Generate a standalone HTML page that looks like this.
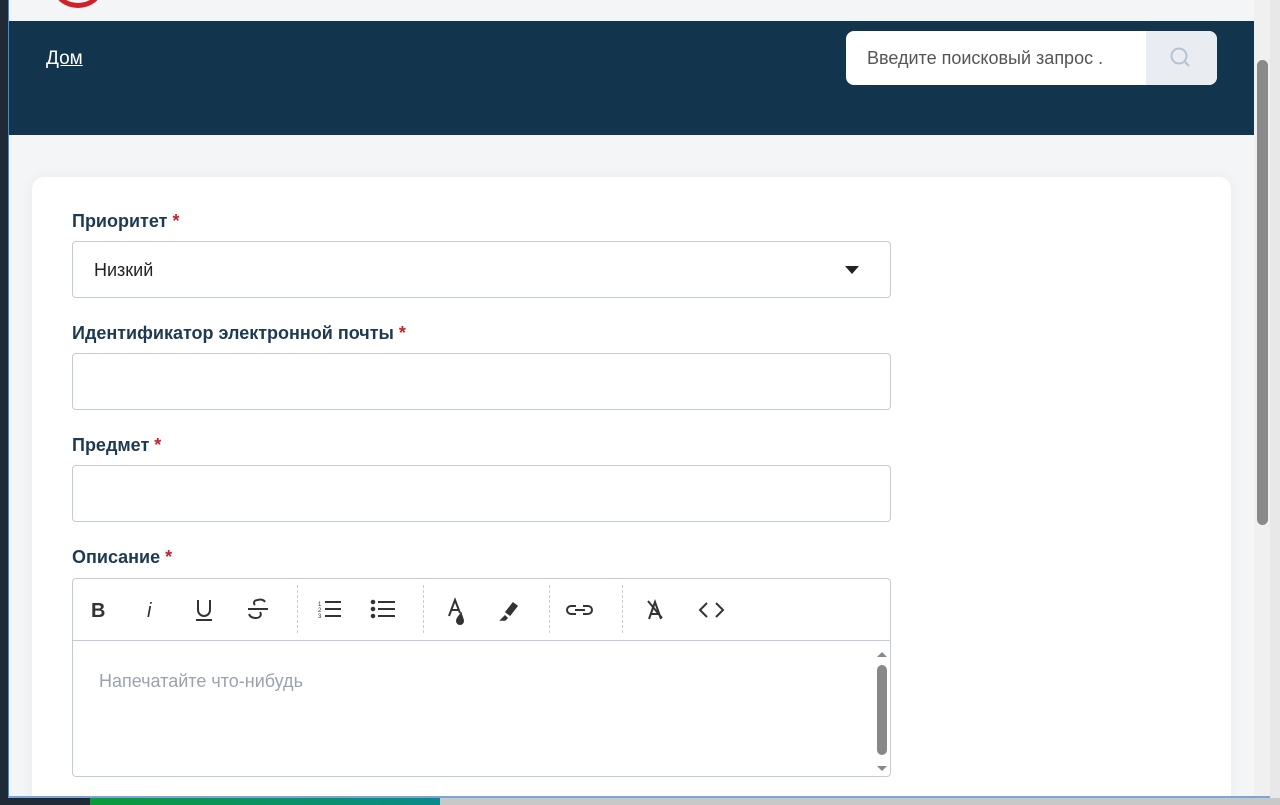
<!DOCTYPE html>
<html><head><meta charset="utf-8"><style>
*{box-sizing:border-box;margin:0;padding:0}
body{width:1280px;height:805px;overflow:hidden;background:#1f2a36;font-family:"Liberation Sans",sans-serif;position:relative}
#win{position:absolute;left:8px;top:0;width:1262px;height:798px;background:#f4f5f7;border-left:1px solid #3a8ee0;border-bottom:2px solid #7aa6d4;overflow:hidden}
#rs{position:absolute;left:1270px;top:0;width:10px;height:805px;background:#e8e8e8}
#tb{position:absolute;left:0;top:798px;width:1280px;height:7px;background:#c8c8c8}
#tb1{position:absolute;left:0;top:798px;width:90px;height:7px;background:#1f2a36}
#tb2{position:absolute;left:90px;top:798px;width:350px;height:7px;background:linear-gradient(90deg,#0a9a3a,#0a8a8a)}
.hdr{position:absolute;left:0;top:21px;width:1245px;height:114px;background:#12344d}
.logo{position:absolute;left:45px;top:-30px;width:48px;height:38px;border:5px solid #d0202a;border-radius:50%}
.home{position:absolute;left:37px;top:27px;color:#fff;font-size:19px;text-decoration:underline}
.search{position:absolute;left:837px;top:10px;width:371px;height:54px;background:#fff;border-radius:8px;overflow:hidden}
.search span{position:absolute;left:21px;top:17px;font-size:18px;color:#555;white-space:nowrap}
.search .btn{position:absolute;right:0;top:0;width:71px;height:54px;background:#e9edf2}
.sb{position:absolute;left:1245px;top:0;width:17px;height:798px;background:#f0f0f0}
.sb i{position:absolute;left:3px;top:60px;width:11px;height:465px;background:#8a8a8a;border-radius:6px}
.card{position:absolute;left:23px;top:177px;width:1199px;height:640px;background:#fff;border-radius:12px;box-shadow:0 0 12px rgba(0,0,0,.05)}
.lab{position:absolute;left:40px;font-size:18px;font-weight:bold;color:#1d3a52}
.lab b{color:#c0232b}
.inp{position:absolute;left:40px;width:819px;height:57px;border:1px solid #c3ccd6;border-radius:4px;background:#fff}
.ed{position:absolute;left:72px;top:578px;width:819px;height:199px;border:1px solid #c3ccd6;border-radius:4px;background:#fff}
.tool{height:62px;border-bottom:1px solid #c3ccd6;position:relative}
.tool svg{position:absolute;top:0}
.sep{position:absolute;top:6px;height:48px;border-left:1px dashed #c8ced6}
</style></head><body>
<div id="win">
<div class="logo"></div>
<div class="hdr">
<div class="home">Дом</div>
<div class="search"><span>Введите поисковый запрос .</span><div class="btn"><svg width="71" height="54"><circle cx="33" cy="25" r="7.5" fill="none" stroke="#b6c2cf" stroke-width="2"/><line x1="38.5" y1="30.5" x2="43" y2="35" stroke="#b6c2cf" stroke-width="2"/></svg></div></div>
</div>
<div class="card">
<div class="lab" style="top:34px">Приоритет <b>*</b></div>
<div class="inp" style="top:64px"><span style="position:absolute;left:21px;top:18px;font-size:18px;color:#222">Низкий</span><svg style="position:absolute;left:772px;top:24px" width="14" height="8"><path d="M0 0H14L7 8Z" fill="#222"/></svg></div>
<div class="lab" style="top:146px">Идентификатор электронной почты <b>*</b></div>
<div class="inp" style="top:176px"></div>
<div class="lab" style="top:258px">Предмет <b>*</b></div>
<div class="inp" style="top:288px"></div>
<div class="lab" style="top:370px">Описание <b>*</b></div>
</div>
<div class="sb"><i></i></div>
</div>
<div class="ed">
<div class="tool">
<svg width="819" height="62" fill="none" stroke="#333" stroke-width="2">
<text x="18" y="38" font-family="Liberation Sans" font-size="20" font-weight="bold" fill="#333" stroke="none">B</text>
<text x="74" y="38" font-family="Liberation Sans" font-size="20" font-style="italic" fill="#333" stroke="none">i</text>
<path d="M125 21v10a6 6 0 0 0 12 0V21M123 41h16"/>
<path d="M175 30h20M192 23a5 4 0 0 0-7-2c-4 0-5 3-3 5M176 35c1 3 4 4 7 4 4 0 6-3 4-6"/>
<path d="M252 23h16M252 30h16M252 37h16"/>
<text x="245" y="27" font-size="6" fill="#333" stroke="none">1</text><text x="245" y="33" font-size="6" fill="#333" stroke="none">2</text><text x="245" y="39" font-size="6" fill="#333" stroke="none">3</text>
<path d="M305 23h17M305 30h17M305 37h17"/><circle cx="300" cy="23" r="1.3" fill="#333"/><circle cx="300" cy="30" r="1.3" fill="#333"/><circle cx="300" cy="37" r="1.3" fill="#333"/>
<path d="M376 37l6-16 5 13M378 31h7"/><path d="M388 35c-3 4-4 5-4 7a3 3 0 0 0 6 0c0-2-1-3-2-7z" fill="#333"/>
<path d="M433 33l7-9 4 3-7 9zM428 41l4-4 2 2-2 2z" fill="#333" stroke-width="1.5"/>
<path d="M503 27h-5a4 4 0 0 0 0 8h5M510 27h5a4 4 0 0 1 0 8h-5M502 31h10"/>
<path d="M576 40l6-17 6 17M578 35h8M575 22l14 17"/>
<path d="M634 24l-7 7 7 7M643 24l7 7-7 7"/>
</svg>
<div class="sep" style="left:224px"></div><div class="sep" style="left:350px"></div><div class="sep" style="left:476px"></div><div class="sep" style="left:549px"></div>
</div>
<div style="position:absolute;left:26px;top:92px;font-size:18px;color:#9aa3ad">Напечатайте что-нибудь</div>
<div style="position:absolute;right:0;top:64px;width:16px;height:132px"><svg width="16" height="132"><path d="M3 14h10L8 9z M3 123h10l-5 5z" fill="#888"/><rect x="3" y="22" width="10" height="90" rx="5" fill="#888"/></svg></div>
</div>
<div id="rs"></div><div id="tb"></div><div id="tb1"></div><div id="tb2"></div>
</body></html>
